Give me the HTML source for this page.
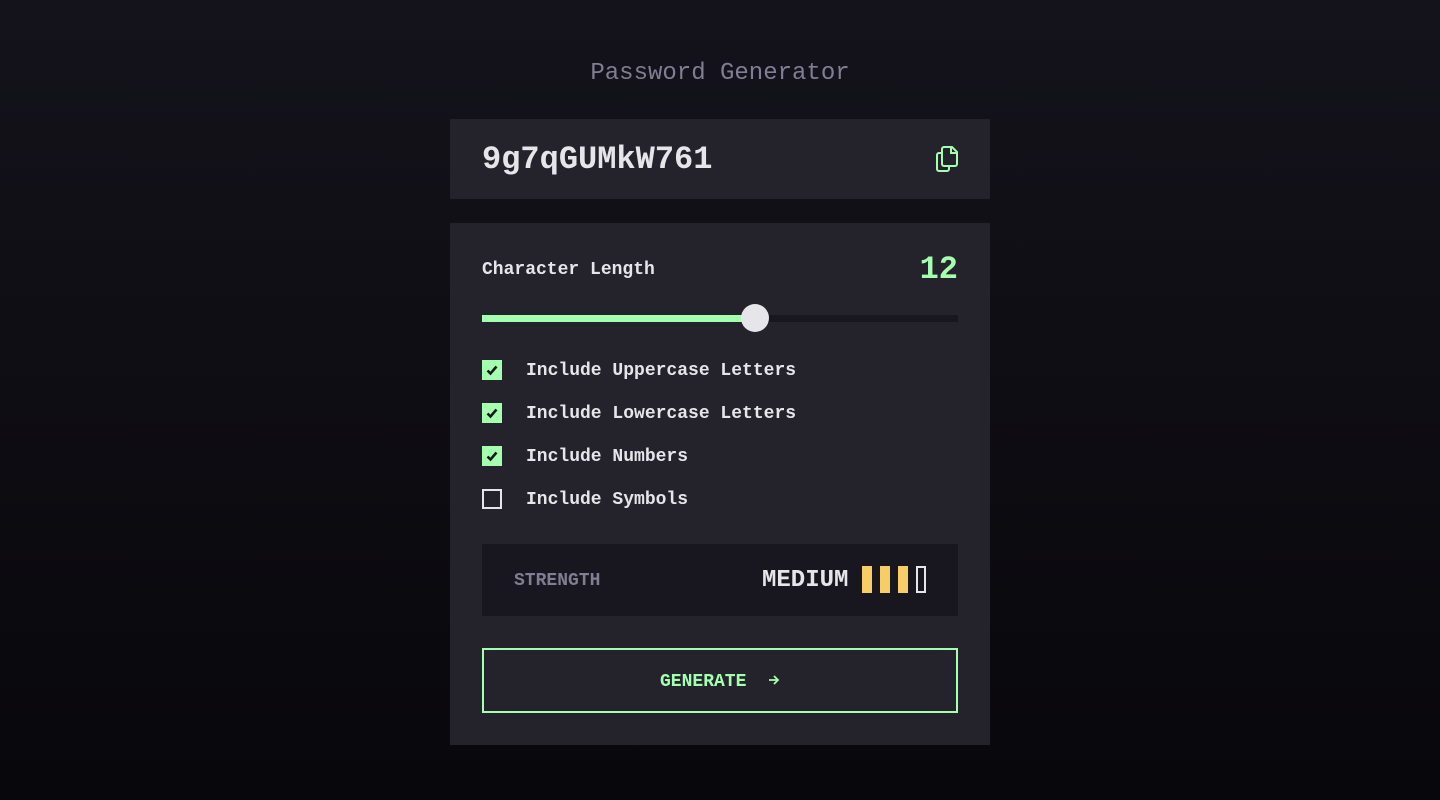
<!DOCTYPE html>
<html><head><meta charset="utf-8"><style>
*{margin:0;padding:0;box-sizing:border-box}
body{width:1440px;height:800px;background:linear-gradient(#14131b,#08070b);font-family:"Liberation Mono","DejaVu Sans Mono",monospace;color:#e6e5ea;position:relative;overflow:hidden}
.a{position:absolute}
.t{left:0;width:1440px;text-align:center;top:58px;font-size:24px;color:#817d92;line-height:32px}
.pw{left:450px;top:119px;width:540px;height:80px;background:#24232c}
.pwt{left:32px;top:19px;font-size:32px;font-weight:bold;line-height:44px}
.panel{left:450px;top:223px;width:540px;height:522px;background:#24232c}
.lbl{font-size:18px;font-weight:bold;line-height:24px}
.cb{width:20px;height:20px;background:#a4ffaf;left:32px}
.cb.off{background:none;border:2px solid #e6e5ea}
</style></head><body>
<div class="a t">Password Generator</div>
<div class="a pw">
 <div class="a pwt">9g7qGUMkW761</div>
 <svg class="a" style="left:486px;top:27px" width="24" height="27" viewBox="0 0 24 27">
  <rect x="1" y="7" width="12" height="18" rx="2" fill="none" stroke="#a4ffaf" stroke-width="2"/>
  <path d="M8 1h8l5 5v12a2 2 0 0 1-2 2H8a2 2 0 0 1-2-2V3a2 2 0 0 1 2-2z" fill="#24232c" stroke="#a4ffaf" stroke-width="2"/>
  <path d="M15 1v6h6" fill="none" stroke="#a4ffaf" stroke-width="2"/>
 </svg>
</div>
<div class="a panel">
 <div class="a lbl" style="left:32px;top:35px">Character Length</div>
 <div class="a" style="right:32px;top:27px;font-size:32px;font-weight:bold;color:#a4ffaf;line-height:40px">12</div>
 <div class="a" style="left:32px;top:92px;width:476px;height:7px;background:#18171f"></div>
 <div class="a" style="left:32px;top:92px;width:273px;height:7px;background:#a4ffaf"></div>
 <div class="a" style="left:291px;top:81px;width:28px;height:28px;border-radius:50%;background:#e6e5ea"></div>

 <div class="a cb" style="top:137px"></div><svg class="a" style="left:36px;top:141px" width="12" height="12" viewBox="0 0 12 12"><path d="M1.5 6.5l3 3 6-7" fill="none" stroke="#18171f" stroke-width="2.6"/></svg>
 <div class="a lbl" style="left:76px;top:136px">Include Uppercase Letters</div>
 <div class="a cb" style="top:180px"></div><svg class="a" style="left:36px;top:184px" width="12" height="12" viewBox="0 0 12 12"><path d="M1.5 6.5l3 3 6-7" fill="none" stroke="#18171f" stroke-width="2.6"/></svg>
 <div class="a lbl" style="left:76px;top:179px">Include Lowercase Letters</div>
 <div class="a cb" style="top:223px"></div><svg class="a" style="left:36px;top:227px" width="12" height="12" viewBox="0 0 12 12"><path d="M1.5 6.5l3 3 6-7" fill="none" stroke="#18171f" stroke-width="2.6"/></svg>
 <div class="a lbl" style="left:76px;top:222px">Include Numbers</div>
 <div class="a cb off" style="top:266px"></div>
 <div class="a lbl" style="left:76px;top:265px">Include Symbols</div>

 <div class="a" style="left:32px;top:321px;width:476px;height:72px;background:#18171f">
  <div class="a lbl" style="left:32px;top:25px;color:#817d92">STRENGTH</div>
  <div class="a" style="left:280px;top:21px;font-size:24px;font-weight:bold;line-height:32px">MEDIUM</div>
  <div class="a" style="left:380px;top:22px;width:10px;height:27px;background:#f8cd65"></div>
  <div class="a" style="left:398px;top:22px;width:10px;height:27px;background:#f8cd65"></div>
  <div class="a" style="left:416px;top:22px;width:10px;height:27px;background:#f8cd65"></div>
  <div class="a" style="left:434px;top:22px;width:10px;height:27px;border:2px solid #e6e5ea"></div>
 </div>
 <div class="a" style="left:32px;top:425px;width:476px;height:65px;border:2px solid #a4ffaf">
  <div class="a lbl" style="left:176px;top:20px;color:#a4ffaf">GENERATE</div>
  <svg class="a" style="left:284px;top:24px" width="12" height="12" viewBox="0 0 12 12"><path d="M1 6h9M6 2l4 4-4 4" fill="none" stroke="#a4ffaf" stroke-width="1.8"/></svg>
 </div>
</div>
</body></html>
